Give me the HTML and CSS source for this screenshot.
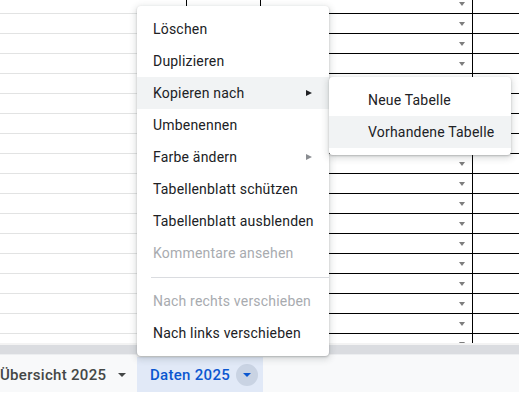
FILE: index.html
```html
<!DOCTYPE html>
<html lang="de">
<head>
<meta charset="utf-8">
<title>Tabellenblatt-Menü</title>
<link rel="stylesheet" href="styles.css">
</head>
<body>
<div class="sheet">
  <div class="grid">
    <div class="row"><div class="ca"></div><div class="cb"></div><div class="cc"><span class="chip"></span></div><div class="cd"></div></div>
    <div class="row"><div class="ca"></div><div class="cb"></div><div class="cc"><span class="chip"></span></div><div class="cd"></div></div>
    <div class="row"><div class="ca"></div><div class="cb"></div><div class="cc"><span class="chip"></span></div><div class="cd"></div></div>
    <div class="row"><div class="ca"></div><div class="cb"></div><div class="cc"><span class="chip"></span></div><div class="cd"></div></div>
    <div class="row"><div class="ca"></div><div class="cb"></div><div class="cc"><span class="chip"></span></div><div class="cd"></div></div>
    <div class="row"><div class="ca"></div><div class="cb"></div><div class="cc"><span class="chip"></span></div><div class="cd"></div></div>
    <div class="row"><div class="ca"></div><div class="cb"></div><div class="cc"><span class="chip"></span></div><div class="cd"></div></div>
    <div class="row"><div class="ca"></div><div class="cb"></div><div class="cc"><span class="chip"></span></div><div class="cd"></div></div>
    <div class="row"><div class="ca"></div><div class="cb"></div><div class="cc"><span class="chip"></span></div><div class="cd"></div></div>
    <div class="row"><div class="ca"></div><div class="cb"></div><div class="cc"><span class="chip"></span></div><div class="cd"></div></div>
    <div class="row"><div class="ca"></div><div class="cb"></div><div class="cc"><span class="chip"></span></div><div class="cd"></div></div>
    <div class="row"><div class="ca"></div><div class="cb"></div><div class="cc"><span class="chip"></span></div><div class="cd"></div></div>
    <div class="row"><div class="ca"></div><div class="cb"></div><div class="cc"><span class="chip"></span></div><div class="cd"></div></div>
    <div class="row"><div class="ca"></div><div class="cb"></div><div class="cc"><span class="chip"></span></div><div class="cd"></div></div>
    <div class="row"><div class="ca"></div><div class="cb"></div><div class="cc"><span class="chip"></span></div><div class="cd"></div></div>
    <div class="row"><div class="ca"></div><div class="cb"></div><div class="cc"><span class="chip"></span></div><div class="cd"></div></div>
    <div class="row"><div class="ca"></div><div class="cb"></div><div class="cc"><span class="chip"></span></div><div class="cd"></div></div>
    <div class="row"><div class="ca"></div><div class="cb"></div><div class="cc"><span class="chip"></span></div><div class="cd"></div></div>
  </div>
  <div class="hscroll"></div>
  <div class="tabbar">
    <div class="tab">
      <span class="tab-label">Übersicht 2025</span>
      <span class="tab-caret"></span>
    </div>
    <div class="tab tab-active">
      <span class="tab-label">Daten 2025</span>
      <span class="tab-btn"><span class="tab-caret tab-caret-blue"></span></span>
    </div>
  </div>

  <div class="menu">
    <div class="item">Löschen</div>
    <div class="item">Duplizieren</div>
    <div class="item item-hover">Kopieren nach<span class="sub-arrow"></span></div>
    <div class="item">Umbenennen</div>
    <div class="item">Farbe ändern<span class="sub-arrow sub-arrow-grey"></span></div>
    <div class="item">Tabellenblatt schützen</div>
    <div class="item">Tabellenblatt ausblenden</div>
    <div class="item item-disabled">Kommentare ansehen</div>
    <div class="sep"></div>
    <div class="item item-disabled">Nach rechts verschieben</div>
    <div class="item">Nach links verschieben</div>
  </div>

  <div class="submenu">
    <div class="item sub-item">Neue Tabelle</div>
    <div class="item sub-item item-hover">Vorhandene Tabelle</div>
  </div>
</div>
</body>
</html>
```

FILE: styles.css
```css
* { box-sizing: border-box; }

html, body {
  margin: 0;
  padding: 0;
  background: #ffffff;
}

body {
  width: 519px;
  height: 404px;
  overflow: hidden;
  font-family: Roboto, "Liberation Sans", Arial, sans-serif;
}

.sheet {
  position: relative;
  width: 519px;
  height: 404px;
  display: flex;
  flex-direction: column;
}

/* ---------- grid ---------- */
.grid {
  margin-top: -6px;
  height: 349px;
  overflow: hidden;
  flex: none;
}

.row {
  display: flex;
  height: 20px;
}

.ca {
  width: 186px;
  height: 20px;
  border-bottom: 1px solid #e2e3e3;
}

.cb, .cc, .cd {
  height: 20px;
  border-left: 1px solid #000000;
  border-bottom: 1px solid #000000;
}

.cb { width: 74px; }

.cc {
  width: 212px;
  display: flex;
  align-items: center;
  justify-content: flex-end;
  padding-right: 7px;
}

.cd { flex: 1; }

.chip {
  width: 0;
  height: 0;
  border-left: 3.5px solid transparent;
  border-right: 3.5px solid transparent;
  border-top: 4px solid #7d7d7d;
}

/* ---------- horizontal scrollbar ---------- */
.hscroll {
  flex: none;
  height: 12px;
  background: #dadce0;
  border-top: 2px solid #f3f3f3;
  border-bottom: 1px solid #eceef0;
}

/* ---------- sheet tabs ---------- */
.tabbar {
  flex: none;
  height: 37px;
  background: #f8f9fa;
  display: flex;
  align-items: flex-end;
}

.tab {
  height: 35px;
  display: flex;
  align-items: center;
  font-size: 15px;
  font-weight: 500;
  color: #444746;
}

.tab:first-child {
  width: 137px;
  padding-left: 0;
}

.tab-label {
  letter-spacing: 0.3px;
}

.tab:first-child .tab-caret {
  margin-left: 12px;
}

.tab-caret {
  width: 0;
  height: 0;
  border-left: 4px solid transparent;
  border-right: 4px solid transparent;
  border-top: 4px solid #444746;
}

.tab-active {
  width: 126px;
  background: #e1e9f7;
  color: #0b57d0;
  padding-left: 13px;
}

.tab-btn {
  width: 22px;
  height: 22px;
  border-radius: 50%;
  background: #c9d3e3;
  margin-left: 6px;
  display: flex;
  align-items: center;
  justify-content: center;
}

.tab-caret-blue {
  border-top-color: #0b57d0;
  margin-top: 1px;
}

/* ---------- context menu ---------- */
.menu, .submenu {
  position: absolute;
  background: #ffffff;
  border-radius: 4px;
  padding: 7px 0;
  box-shadow: 0 2px 6px 2px rgba(60, 64, 67, 0.15), 0 1px 2px 0 rgba(60, 64, 67, 0.3);
}

.menu {
  left: 137px;
  top: 6px;
  width: 192px;
  height: 350px;
  z-index: 2;
}

.submenu {
  left: 329px;
  top: 77px;
  width: 182px;
  height: 78px;
  z-index: 3;
}

.item {
  position: relative;
  height: 32px;
  display: flex;
  align-items: center;
  padding-left: 16px;
  font-size: 14px;
  letter-spacing: 0.2px;
  color: #202124;
  white-space: nowrap;
}

.item-hover {
  background: #f1f3f4;
}

.item-disabled {
  color: #a8abaf;
}

.sub-item {
  padding-left: 39px;
}

.sub-arrow {
  position: absolute;
  right: 17px;
  top: 13px;
  width: 0;
  height: 0;
  border-top: 3px solid transparent;
  border-bottom: 3px solid transparent;
  border-left: 6px solid #202124;
}

.sub-arrow-grey {
  border-left-color: #8a8d91;
}

.sep {
  height: 16px;
  display: flex;
  align-items: center;
  padding-left: 14px;
}

.sep::after {
  content: "";
  display: block;
  width: 100%;
  height: 1px;
  background: #dadce0;
}
```
